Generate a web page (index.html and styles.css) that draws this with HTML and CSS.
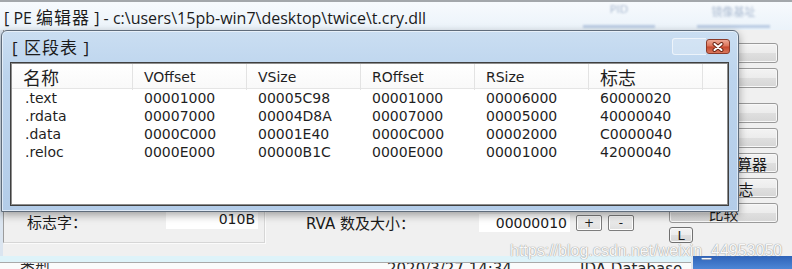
FILE: index.html
```html
<!DOCTYPE html>
<html lang="zh-CN">
  <head>
    <meta charset="UTF-8" />
    <title>PE 编辑器</title>
    <link rel="stylesheet" href="styles.css">
  </head>
  <body>
    <div class="screen">
      <div class="main-window">
        <div class="titlebar">
          <span class="title">[ PE <span class="cjk">编辑器</span> ] - c:\users\15pb-win7\desktop\twice\t.cry.dll</span>
          <div class="ghosts">
            <div class="ghost ghost-a"><span class="ghost-text">PID</span><span class="ghost-line"></span></div>
            <div class="ghost ghost-b"><span class="ghost-text">镜像基址</span><span class="ghost-line"></span></div>
          </div>
        </div>
        <div class="body">
          <div class="group-left">
            <div class="field-row">
              <span class="label label-flag">标志字：</span>
              <span class="input input-short">010B</span>
            </div>
          </div>
          <div class="middle">
            <div class="field-row">
              <span class="label label-rva">RVA 数及大小：</span>
              <span class="input input-rva">00000010</span>
              <span class="mini-btn">+</span>
              <span class="mini-btn">-</span>
            </div>
          </div>
          <div class="side">
            <div class="btn-group">
              <div class="btn">打开</div>
              <div class="btn">保存</div>
            </div>
            <div class="btn-group btn-group-low">
              <div class="btn">区段</div>
              <div class="btn">目录</div>
              <div class="btn btn-calc">位置计算器</div>
              <div class="btn">区段标志</div>
              <div class="btn">比较</div>
            </div>
            <div class="btn btn-l">L</div>
          </div>
        </div>
        <div class="bottom">
          <div class="bottom-main">
            <div class="band"></div>
            <div class="strip">
              <span class="strip-a">类型</span>
              <span class="strip-b">2020/3/27 14:34</span>
              <span class="strip-c">IDA Database</span>
            </div>
          </div>
          <div class="bottom-blue"></div>
        </div>
      </div>

      <div class="dialog">
        <div class="dialog-title">
          <span class="dialog-name">[ 区段表 ]</span>
          <span class="ghost-btn"></span>
          <span class="close">
            <svg width="14" height="10" viewBox="0 0 14 10">
              <path d="M3.5 2 L10.5 8 M10.5 2 L3.5 8" stroke="#6b2616" stroke-width="4" stroke-linecap="round" />
              <path d="M3.5 2 L10.5 8 M10.5 2 L3.5 8" stroke="#fff" stroke-width="2" stroke-linecap="round" />
            </svg>
          </span>
        </div>
        <div class="list">
          <div class="list-head">
            <span class="head-cell cjk-head">名称</span>
            <span class="head-cell">VOffset</span>
            <span class="head-cell">VSize</span>
            <span class="head-cell">ROffset</span>
            <span class="head-cell">RSize</span>
            <span class="head-cell cjk-head">标志</span>
            <span class="head-cell head-end"></span>
          </div>
          <div class="list-row">
            <span>.text</span><span>00001000</span><span>00005C98</span><span>00001000</span><span>00006000</span><span>60000020</span>
          </div>
          <div class="list-row">
            <span>.rdata</span><span>00007000</span><span>00004D8A</span><span>00007000</span><span>00005000</span><span>40000040</span>
          </div>
          <div class="list-row">
            <span>.data</span><span>0000C000</span><span>00001E40</span><span>0000C000</span><span>00002000</span><span>C0000040</span>
          </div>
          <div class="list-row">
            <span>.reloc</span><span>0000E000</span><span>00000B1C</span><span>0000E000</span><span>00001000</span><span>42000040</span>
          </div>
        </div>
      </div>

      <div class="watermark">https://blog.csdn.net/weixin_44953050</div>
    </div>
  </body>
</html>
```

FILE: styles.css
```css
* {
  box-sizing: border-box;
}

body {
  margin: 0;
  background: #f0f0f0;
  font-family: "DejaVu Sans", "Noto Sans CJK SC", sans-serif;
  font-size: 14px;
  color: #1f1f1f;
}

.screen {
  position: relative;
  width: 792px;
  height: 269px;
  overflow: hidden;
}

/* main window behind the dialog */
.titlebar {
  height: 30px;
  display: flex;
  align-items: center;
  padding-left: 4px;
  border-top: 2px solid #a3a7ab;
  background: linear-gradient(#f7fafd, #ebf3fa);
}

.title {
  font-family: "Open Sans", "Noto Sans CJK SC", sans-serif;
  font-size: 16px;
  color: #1b1b1b;
  white-space: nowrap;
}

.title .cjk {
  font-size: 17px;
  letter-spacing: 1px;
}

.ghosts {
  margin-left: auto;
  width: 209px;
  height: 28px;
  display: flex;
  gap: 42px;
  filter: blur(1.3px);
  opacity: 0.4;
}

.ghost {
  display: flex;
  flex-direction: column;
  justify-content: space-between;
  align-items: center;
  padding: 1px 0 2px;
}

.ghost-a {
  width: 72px;
}

.ghost-b {
  width: 73px;
}

.ghost-text {
  font-size: 11px;
  color: #3b5c8e;
}

.ghost-line {
  width: 100%;
  height: 3px;
  background: #6d8fc0;
}

.body {
  height: 226px;
  display: flex;
  border-left: 3px solid #dbe5f0;
  background: #f0f0f0;
}

.group-left {
  width: 262px;
  height: 213px;
  display: flex;
  align-items: flex-end;
  padding-bottom: 10px;
  border-left: 1px solid #9c9c9c;
  border-right: 1px solid #d6d6d6;
  border-bottom: 1px solid #d6d6d6;
  box-shadow: 1px 1px 0 #fbfbfb;
}

.field-row {
  display: flex;
  align-items: center;
}

.label {
  font-size: 15px;
  color: #1a1a1a;
}

.label-flag {
  width: 162px;
  padding-left: 23px;
  padding-top: 5px;
}

.input {
  height: 19px;
  display: flex;
  align-items: center;
  justify-content: flex-end;
  padding-right: 3px;
  background: #fff;
  color: #1a1a1a;
}

.input-short {
  width: 92px;
}

.middle {
  width: 404px;
  padding-top: 182px;
  padding-left: 41px;
}

.label-rva {
  width: 173px;
}

.input-rva {
  width: 91px;
  height: 18px;
  margin-right: 6px;
}

.mini-btn {
  width: 26px;
  height: 16px;
  margin-right: 6px;
  display: flex;
  align-items: center;
  justify-content: center;
  font-size: 12px;
  border: 1px solid #7d7d7d;
  border-radius: 2px;
  box-shadow: inset 0 0 0 1px #fff;
  background: linear-gradient(#f4f4f4, #dedede);
}

.side {
  width: 109px;
  padding-top: 13px;
  display: flex;
  flex-direction: column;
}

.btn-group {
  display: flex;
  flex-direction: column;
  gap: 5px;
}

.btn-group-low {
  margin-top: 15px;
}

.btn {
  height: 20px;
  display: flex;
  align-items: center;
  justify-content: center;
  font-size: 15px;
  color: #1a1a1a;
  border: 1px solid #9a9a9a;
  border-radius: 3px;
  box-shadow: inset 0 0 0 1px #f8f8f8;
  background: linear-gradient(#f3f3f3 0%, #ececec 50%, #dfdfdf 51%, #d6d6d6 100%);
}

.btn-calc {
  padding-left: 12px;
}

.btn-l {
  width: 24px;
  height: 16px;
  margin-top: 4px;
  font-size: 13px;
  border-color: #707070;
}

.bottom {
  height: 13px;
  display: flex;
}

.bottom-main {
  width: 691px;
  display: flex;
  flex-direction: column;
}

.band {
  height: 6px;
  background: #def3f9;
}

.strip {
  height: 7px;
  overflow: hidden;
  border-top: 1px solid #a9a9a9;
  background: #fbfbfb;
  display: flex;
  font-size: 15px;
  line-height: 16px;
  color: #2a2a2a;
}

.strip span {
  margin-top: -2px;
}

.strip-a {
  margin-left: 20px;
  width: 367px;
}

.strip-b {
  width: 193px;
}

.bottom-blue {
  flex: 1;
  border-left: 2px solid #e4e8ee;
  background: linear-gradient(#2f63b8, #4d86d6);
}

/* section table dialog */
.dialog {
  position: absolute;
  left: 1px;
  top: 30px;
  width: 738px;
  height: 182px;
  display: flex;
  flex-direction: column;
  padding: 0 9px 5px 8px;
  border: 1px solid #5f6c7b;
  border-radius: 6px 6px 0 0;
  background: linear-gradient(180deg, #cadef2 0%, #bcd4ed 25%, #b3cce8 100%);
  box-shadow: 0 3px 8px rgba(0, 0, 0, 0.35), inset 0 0 0 1px rgba(255, 255, 255, 0.55);
}

.dialog-title {
  height: 31px;
  display: flex;
  align-items: center;
}

.dialog-name {
  padding-left: 2px;
  font-family: "Open Sans", "Noto Sans CJK SC", sans-serif;
  font-size: 17px;
  letter-spacing: 1px;
  color: #1b1b1b;
}

.ghost-btn {
  margin-left: auto;
  width: 34px;
  height: 17px;
  border: 1px solid rgba(255, 255, 255, 0.6);
  border-right: none;
  border-radius: 3px 0 0 3px;
  background: rgba(255, 255, 255, 0.22);
}

.close {
  width: 24px;
  height: 15px;
  margin-right: -1px;
  display: flex;
  align-items: center;
  justify-content: center;
  border: 1px solid #8a3b2a;
  border-radius: 3px;
  background: linear-gradient(#eda894 0%, #dc7258 48%, #c5472c 52%, #d9765c 100%);
}

.list {
  flex: 1;
  background: #fff;
  border: 1px solid #3f3f3f;
  box-shadow: inset 0 0 0 1px #8e8e8e;
  padding: 1px;
}

.list-head,
.list-row {
  display: grid;
  grid-template-columns: 121px repeat(5, 114px) 1fr;
}

.list-head {
  height: 25px;
  border-bottom: 1px solid #e5e5e5;
  background: linear-gradient(#ffffff, #f9f9f9);
}

.head-cell {
  display: flex;
  align-items: center;
  padding-left: 11px;
  border-right: 1px solid #e3e3e3;
}

.head-end {
  border-right: none;
}

.cjk-head {
  font-size: 18px;
}

.list-row {
  height: 18px;
  align-items: center;
}

.list-row span {
  padding-left: 11px;
}

.list-row span:first-child {
  padding-left: 13px;
}

.watermark {
  position: absolute;
  left: 510px;
  top: 242px;
  font-family: "Liberation Sans", sans-serif;
  font-size: 16px;
  line-height: 18px;
  color: #f8f8f8;
  text-shadow: 0 0 1px #8f8f8f, 0 0 1px #a8a8a8;
}
```
